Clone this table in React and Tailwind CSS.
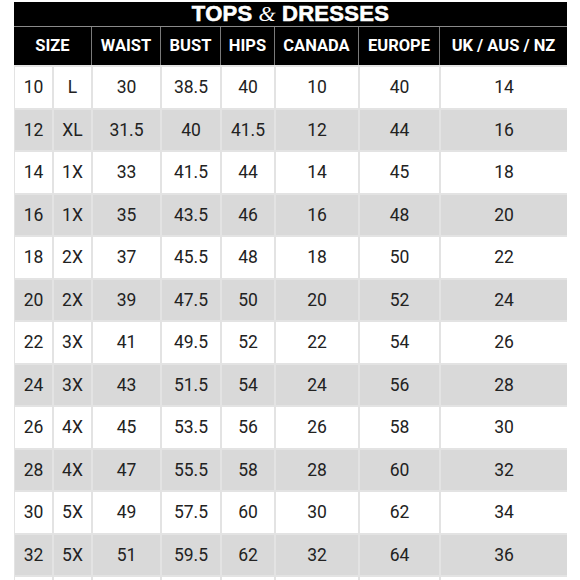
const widths = [38, 39, 69, 60, 54, 84, 81, 128];

const rows = [
  ["10", "L", "30", "38.5", "40", "10", "40", "14"],
  ["12", "XL", "31.5", "40", "41.5", "12", "44", "16"],
  ["14", "1X", "33", "41.5", "44", "14", "45", "18"],
  ["16", "1X", "35", "43.5", "46", "16", "48", "20"],
  ["18", "2X", "37", "45.5", "48", "18", "50", "22"],
  ["20", "2X", "39", "47.5", "50", "20", "52", "24"],
  ["22", "3X", "41", "49.5", "52", "22", "54", "26"],
  ["24", "3X", "43", "51.5", "54", "24", "56", "28"],
  ["26", "4X", "45", "53.5", "56", "26", "58", "30"],
  ["28", "4X", "47", "55.5", "58", "28", "60", "32"],
  ["30", "5X", "49", "57.5", "60", "30", "62", "34"],
  ["32", "5X", "51", "59.5", "62", "32", "64", "36"],
  // next row only peeks in at the bottom edge
  ["", "", "", "", "", "", "", ""],
];

const headers = [
  ["SIZE", 77],
  ["WAIST", 69],
  ["BUST", 60],
  ["HIPS", 54],
  ["CANADA", 84],
  ["EUROPE", 81],
  ["UK / AUS / NZ", 128],
];

export default function App() {
  return (
    <div className="w-[580px] h-[580px] overflow-hidden bg-white pt-[2px] pl-[14px] font-['Roboto',sans-serif]">
      <div className="w-[553px]">
        <div className="h-[25px] bg-black border-b border-[#8a8a8a] flex items-center justify-center text-white font-['Liberation_Sans',sans-serif] font-black text-[22px] leading-none tracking-[0.3px] [-webkit-text-stroke:0.6px_white]">
          <span>TOPS</span>
          <span className="mx-[6px] font-['Liberation_Serif',serif] italic font-normal text-[22px] [-webkit-text-stroke:0px]">&amp;</span>
          <span>DRESSES</span>
        </div>
        <div className="h-[38px] bg-black flex text-white font-bold text-[16.5px]">
          {headers.map(([h, w], i) => (
            <div
              key={h}
              style={{ width: w }}
              className={`flex items-center justify-center ${i > 0 ? "border-l border-[#7a7a7a]" : ""}`}
            >
              {h}
            </div>
          ))}
        </div>
        {rows.map((r, ri) => (
          <div
            key={ri}
            className={`h-[42.5px] flex border-t-2 border-[#e3e3e3] text-[17.5px] text-[#222] ${
              ri % 2 === 1 ? "bg-[#d9d9d9]" : "bg-white"
            }`}
          >
            {r.map((c, ci) => (
              <div
                key={ci}
                style={{ width: widths[ci] }}
                className={`flex items-center justify-center ${ci > 0 ? "border-l-2 border-[#e3e3e3]" : "border-l border-[#e3e3e3]"}`}
              >
                {c}
              </div>
            ))}
          </div>
        ))}
      </div>
    </div>
  );
}
